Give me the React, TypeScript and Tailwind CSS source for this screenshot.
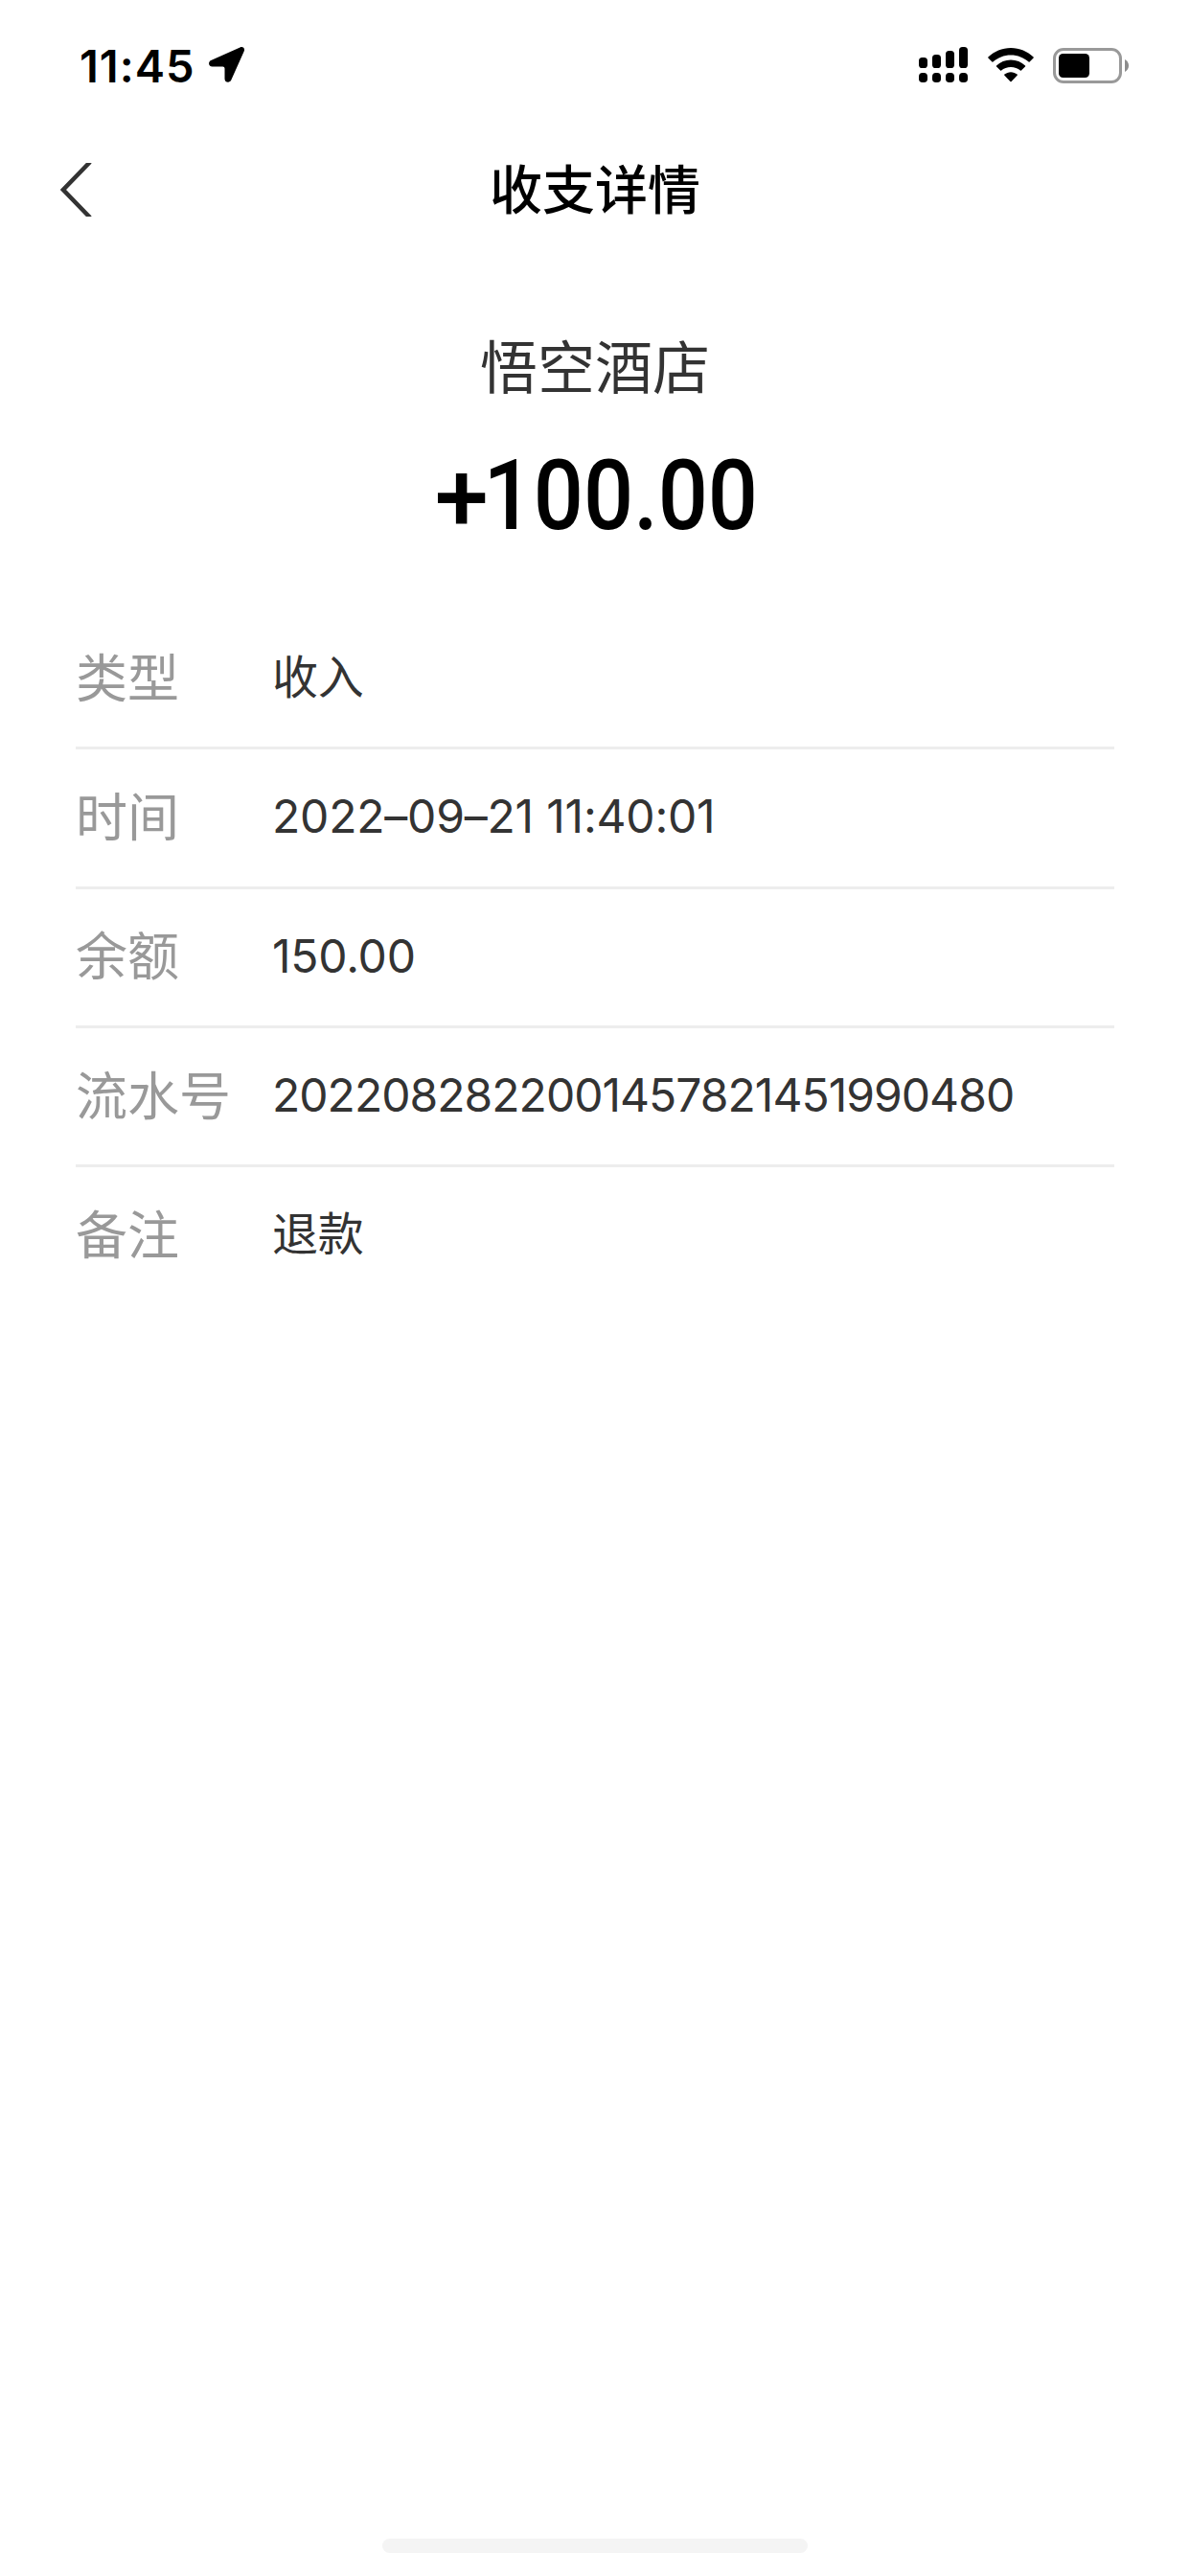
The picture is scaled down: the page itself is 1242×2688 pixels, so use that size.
import clsx from "clsx";

type DetailItem = {
  label: string;
  value: string;
  tight?: boolean;
};

const details: DetailItem[] = [
  { label: "类型", value: "收入" },
  { label: "时间", value: "2022–09–21 11:40:01" },
  { label: "余额", value: "150.00" },
  { label: "流水号", value: "2022082822001457821451990480", tight: true },
  { label: "备注", value: "退款" },
];

const SignalIcon = () => (
  <svg width="51" height="38" viewBox="0 0 51 38" fill="currentColor">
    <rect x="0" y="11" width="9" height="11" rx="3.6" />
    <rect x="14" y="8" width="9" height="14" rx="3.6" />
    <rect x="28" y="4" width="9" height="18" rx="3.6" />
    <rect x="42" y="0" width="9" height="22" rx="3.6" />
    <rect x="0" y="27" width="9" height="10" rx="3.8" />
    <rect x="14" y="27" width="9" height="10" rx="3.8" />
    <rect x="28" y="27" width="9" height="10" rx="3.8" />
    <rect x="42" y="27" width="9" height="10" rx="3.8" />
  </svg>
);

const WifiIcon = () => (
  <svg width="48" height="36" viewBox="0 0 48 36" fill="currentColor">
    <path d="M24 0C14.9 0 6.6 3.6.4 9.500Q-.1 10 .4 10.500L4.400 14.600Q4.900 15.100 5.400 14.600C10.300 10 16.800 7.400 24 7.400S37.700 10 42.600 14.600Q43.100 15.100 43.600 14.600L47.600 10.500Q48.100 10 47.600 9.500C41.400 3.600 33.100 0 24 0Z" />
    <path d="M24 12.600C18.200 12.600 13 14.900 9 18.500Q8.500 19 9 19.500L13.100 23.600Q13.600 24.100 14.100 23.600C16.700 21.300 20.200 20 24 20S31.300 21.300 33.900 23.600Q34.400 24.100 34.900 23.600L39 19.500Q39.500 19 39 18.500C35 14.900 29.800 12.600 24 12.600Z" />
    <path d="M24 25.200C21.500 25.200 19.200 26.100 17.400 27.600Q16.900 28.100 17.400 28.700L23.400 35Q24 35.600 24.600 35L30.600 28.700Q31.100 28.100 30.600 27.600C28.800 26.100 26.500 25.200 24 25.200Z" />
  </svg>
);

const BatteryIcon = () => (
  <svg width="79" height="37" viewBox="0 0 79 37">
    <rect x="1.5" y="1.5" width="69" height="34" rx="9.5" fill="none" stroke="#999" strokeWidth="3" />
    <rect x="6" y="6" width="32" height="25" rx="4.5" fill="#000" />
    <path d="M75 12C77.600 13.400 79 15.700 79 18.500S77.600 23.800 75 25Z" fill="#8c8c8c" />
  </svg>
);

const StatusBar = () => (
  <div className="flex h-[136px] items-center justify-between pr-[64px] pl-[83px] text-black">
    <div className="flex items-center">
      <span className="text-[47px] leading-none font-semibold tracking-[1px]">11:45</span>
      <svg className="ml-[14px]" width="38" height="38" viewBox="0 0 38 38" fill="currentColor">
        <path d="M32.500 .4C35.500 -.9 38 1.500 36.700 4.500L23.300 34.600C21.800 38 16.500 37.200 16.500 33.200V22.500Q16.500 20.500 14.500 20.500H3.600C-.4 20.500 -1.200 15.600 2.200 14Z" />
      </svg>
    </div>
    <div className="flex items-center">
      <SignalIcon />
      <div className="ml-[21px]">
        <WifiIcon />
      </div>
      <div className="ml-[20px]">
        <BatteryIcon />
      </div>
    </div>
  </div>
);

const NavBar = () => (
  <header className="grid h-[124px] grid-cols-[200px_1fr_200px] items-center">
    <button className="pl-[63px]" aria-label="返回">
      <svg width="33" height="56" viewBox="0 0 33 56" fill="none">
        <path d="M31 -1L3 28L31 57" stroke="#333" strokeWidth="4.500" />
      </svg>
    </button>
    <h1 className="text-center text-[55px] leading-none font-medium text-black">收支详情</h1>
  </header>
);

const DetailRow = ({ label, value, tight }: DetailItem) => (
  <div className="flex h-[145.33px] items-center border-b-[3px] border-[#ededed] last:border-transparent">
    <dt className="w-[205px] shrink-0 pt-px text-[54px] leading-none text-[#999]">{label}</dt>
    <dd
      className={clsx(
        "pb-[2px] text-[48px] leading-none whitespace-nowrap text-[#333]",
        tight ? "tracking-[-0.97px]" : "tracking-[-0.2px]"
      )}
    >
      {value}
    </dd>
  </div>
);

export default function App() {
  return (
    <div className="flex h-[2688px] w-[1242px] flex-col bg-white font-['Inter','Noto_Sans_CJK_SC',sans-serif]">
      <StatusBar />
      <NavBar />

      <main className="flex-1">
        <div className="flex flex-col items-center pt-[94px]">
          <p className="text-[60px] leading-none text-[#333]">悟空酒店</p>
          <p className="mt-[52px] flex origin-center scale-x-90 font-['Roboto',sans-serif] text-[102px] leading-none font-medium text-black">
            <span className="mr-[-3px] ml-[5px] scale-x-110 pt-[2px]">+</span>
            <span>100.00</span>
          </p>
        </div>

        <dl className="mr-[79px] ml-[79px] pt-[67px]">
          {details.map((item) => (
            <DetailRow key={item.label} {...item} />
          ))}
        </dl>
      </main>

      <div className="mx-auto mb-[24px] h-[15px] w-[444px] rounded-full bg-[#f4f4f4]" />
    </div>
  );
}
